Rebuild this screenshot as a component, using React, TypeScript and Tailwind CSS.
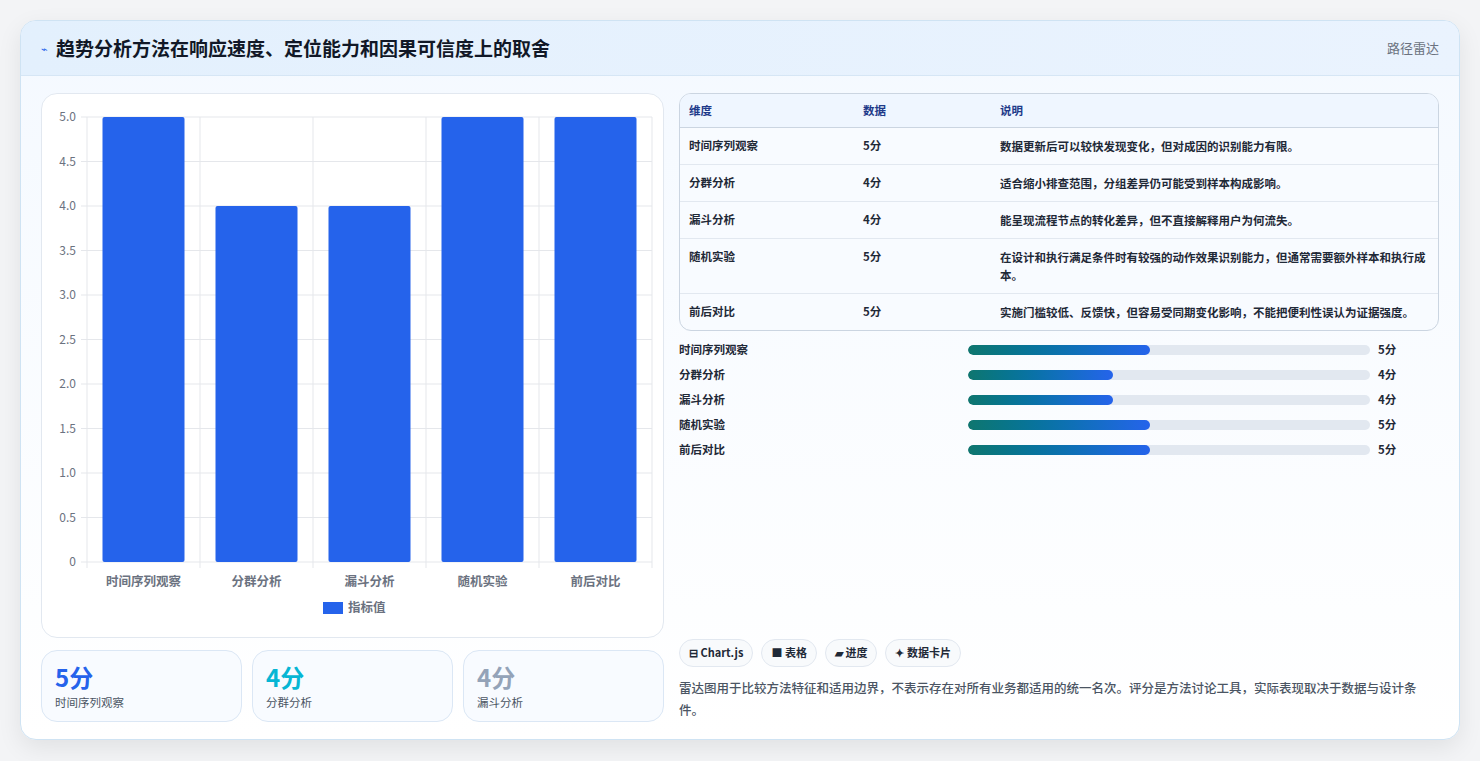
const rows = [
  { name: "时间序列观察", score: 5, note: "数据更新后可以较快发现变化，但对成因的识别能力有限。" },
  { name: "分群分析", score: 4, note: "适合缩小排查范围，分组差异仍可能受到样本构成影响。" },
  { name: "漏斗分析", score: 4, note: "能呈现流程节点的转化差异，但不直接解释用户为何流失。" },
  { name: "随机实验", score: 5, note: "在设计和执行满足条件时有较强的动作效果识别能力，但通常需要额外样本和执行成本。" },
  { name: "前后对比", score: 5, note: "实施门槛较低、反馈快，但容易受同期变化影响，不能把便利性误认为证据强度。" },
];

const font = { fontFamily: '"Noto Sans CJK SC", "Noto Sans", sans-serif' };

function BarChart() {
  const left = 45, right = 610, top = 23, bottom = 468;
  const h = bottom - top;
  const step = (right - left) / 5;
  const ticks = [0, 0.5, 1, 1.5, 2, 2.5, 3, 3.5, 4, 4.5, 5];
  return (
    <svg width="623" height="543" className="block">
      {ticks.map((t) => {
        const y = bottom - (t / 5) * h;
        return (
          <g key={t}>
            <line x1={left - 6} x2={right} y1={y} y2={y} stroke="#e5e7eb" />
            <text x={left - 11} y={y + 4} textAnchor="end" fontSize="12" fill="#6b7280">
              {t === 0 ? "0" : t.toFixed(1)}
            </text>
          </g>
        );
      })}
      {[0, 1, 2, 3, 4, 5].map((i) => (
        <line key={i} x1={left + i * step} x2={left + i * step} y1={top} y2={bottom + 6} stroke="#e5e7eb" />
      ))}
      {rows.map((r, i) => {
        const bh = (r.score / 5) * h;
        const x = left + i * step + 15.5;
        return (
          <g key={r.name}>
            <rect x={x} y={bottom - bh} width={82} height={bh} rx={2} fill="#2563eb" />
            <text x={left + i * step + step / 2} y={492} textAnchor="middle" fontSize="12.5" fontWeight="600" fill="#6b7280">
              {r.name}
            </text>
          </g>
        );
      })}
      <rect x={281} y={508} width={20} height={12} fill="#2563eb" />
      <text x={306} y={518} fontSize="12.5" fontWeight="600" fill="#6b7280">指标值</text>
    </svg>
  );
}

export default function App() {
  return (
    <div className="min-h-[761px] bg-[#f3f4f6] pt-5 px-5" style={font}>
      <div className="rounded-2xl border border-[#cfe3f3] bg-gradient-to-b from-[#f4f9ff] to-white shadow-[0_8px_24px_rgba(0,0,0,0.08)] overflow-hidden h-[720px] flex flex-col">
        <div className="h-[55px] flex items-center justify-between px-5 bg-gradient-to-r from-[#e3f0fd] to-[#eaf3fe] border-b border-[#d6e6f5]">
          <div className="flex items-center gap-2">
            <span className="text-[#2563eb] text-[11px]">⌁</span>
            <h1 className="text-[19px] font-bold text-[#111827]">趋势分析方法在响应速度、定位能力和因果可信度上的取舍</h1>
          </div>
          <span className="text-[13px] text-[#6b7280]">路径雷达</span>
        </div>
        <div className="flex gap-[15px] px-5 pt-[17px]">
          <div className="w-[623px] flex flex-col gap-[12px]">
            <div className="rounded-2xl border border-[#e2e8f0] bg-white">
              <BarChart />
            </div>
            <div className="grid grid-cols-3 gap-[10px]">
              {[
                ["5分", "text-[#2563eb]", "时间序列观察"],
                ["4分", "text-[#06b6d4]", "分群分析"],
                ["4分", "text-[#94a3b8]", "漏斗分析"],
              ].map(([v, c, l]) => (
                <div key={l} className="h-[72px] rounded-2xl border border-[#dbe7f5] bg-[#f8fbff] px-[13px] pt-[10px]">
                  <div className={`text-[24px] font-bold leading-[32px] ${c}`}>{v}</div>
                  <div className="text-[11.5px] text-[#4b5563] mt-[1px]">{l}</div>
                </div>
              ))}
            </div>
          </div>
          <div className="flex-1 flex flex-col">
            <div className="rounded-xl border border-[#cbd5e1] overflow-hidden bg-[#f8fbff]">
              <table className="w-full text-[11.5px] text-[#1f2937]">
                <thead>
                  <tr className="bg-[#eff6ff] text-[#1e3a8a] text-left border-b border-[#cbd5e1]">
                    <th className="h-[33px] pl-[9px] font-semibold w-[183px]">维度</th>
                    <th className="font-semibold w-[137px]">数据</th>
                    <th className="font-semibold">说明</th>
                  </tr>
                </thead>
                <tbody>
                  {rows.map((r) => (
                    <tr key={r.name} className="border-t border-[#e2e8f0] align-top">
                      <td className="pl-[9px] py-[9px] font-semibold">{r.name}</td>
                      <td className="py-[9px] font-semibold">{r.score}分</td>
                      <td className="py-[9px] pr-[10px] leading-[18px] font-semibold">{r.note}</td>
                    </tr>
                  ))}
                </tbody>
              </table>
            </div>
            <div className="flex flex-col gap-[7px] mt-[10px]">
              {rows.map((r) => (
                <div key={r.name} className="flex items-center h-[18px] text-[11.5px] font-semibold text-[#1f2937]">
                  <div className="w-[289px]">{r.name}</div>
                  <div className="w-[402px] h-[10px] rounded-full bg-[#e2e8f0] overflow-hidden">
                    <div
                      className="h-full rounded-full bg-gradient-to-r from-[#0f766e] to-[#2563eb]"
                      style={{ width: r.score === 5 ? "45.3%" : "36%" }}
                    />
                  </div>
                  <div className="ml-2">{r.score}分</div>
                </div>
              ))}
            </div>
            <div className="flex gap-[8px] mt-[180px]">
              {["⊟ Chart.js", "■ 表格", "▰ 进度", "✦ 数据卡片"].map((c) => (
                <span key={c} className="h-[28px] px-[9px] flex items-center rounded-full border border-[#e2e8f0] bg-[#f8fafc] text-[11px] font-semibold text-[#1f2937]">
                  {c}
                </span>
              ))}
            </div>
            <p className="mt-[10px] text-[12.5px] leading-[22px] text-[#4b5563] font-medium">
              雷达图用于比较方法特征和适用边界，不表示存在对所有业务都适用的统一名次。评分是方法讨论工具，实际表现取决于数据与设计条件。
            </p>
          </div>
        </div>
      </div>
    </div>
  );
}
